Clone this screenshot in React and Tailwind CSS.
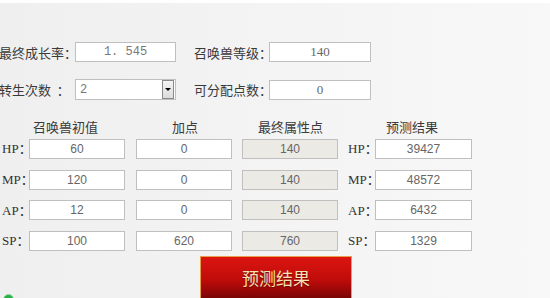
const cjk = "font-['Noto_Sans_CJK_SC',sans-serif]";
const box = 'h-[20px] border border-[#bfbfbf] flex items-center justify-center text-[#666]';

const rows = [
  { k: 'HP', base: '60', add: '0', fin: '140', res: '39427' },
  { k: 'MP', base: '120', add: '0', fin: '140', res: '48572' },
  { k: 'AP', base: '12', add: '0', fin: '140', res: '6432' },
  { k: 'SP', base: '100', add: '620', fin: '760', res: '1329' },
];

function Label({ children, className = '' }) {
  return (
    <div className={`text-[13px] text-[#3a3a3a] leading-none whitespace-nowrap ${cjk} ${className}`}>
      {children}
    </div>
  );
}

function StatLabel({ name, className = '' }) {
  return (
    <div className={`text-[13px] text-[#333] whitespace-nowrap font-['Liberation_Serif','Noto_Sans_CJK_SC',serif] ${className}`}>
      {name}：
    </div>
  );
}

function Val({ children, grey = false, className = '' }) {
  return (
    <div
      className={`${box} ${grey ? 'bg-[#ebeae4]' : 'bg-white'} text-[12px] font-['Liberation_Sans',sans-serif] ${className}`}
    >
      {children}
    </div>
  );
}

export default function App() {
  return (
    <div className="relative w-[550px] h-[298px] overflow-hidden bg-gradient-to-r from-[#efefef] to-[#f8f8f8] border-t-[3px] border-white">
      {/* top settings */}
      <div className="flex items-center h-[20px] mt-[39px]">
        <Label className="w-[76px] -ml-[1px]">最终成长率：</Label>
        <div className={`${box} w-[101px] bg-white text-[12px] text-[#777] font-['Liberation_Mono',monospace]`}>1. 545</div>
        <Label className="ml-[18px] w-[75px]">召唤兽等级：</Label>
        <div className={`${box} w-[102px] bg-white text-[13px] font-['Liberation_Serif',serif]`}>140</div>
      </div>

      <div className="flex items-center h-[21px] mt-[17px]">
        <Label className="w-[76px] -ml-[1px]">转生次数&nbsp;&nbsp;：</Label>
        <div className="w-[101px] h-[21px] border border-[#bfbfbf] bg-white flex items-center justify-between pl-[4px] pr-[1px]">
          <span className="text-[12px] text-[#777] font-['Liberation_Mono',monospace]">2</span>
          <div className="w-[12px] h-[19px] border border-[#8a8a8a] bg-gradient-to-b from-[#f4f4f4] to-[#dcdcdc] flex items-center justify-center">
            <div className="w-0 h-0 border-l-[3px] border-r-[3px] border-t-[3px] border-l-transparent border-r-transparent border-t-black" />
          </div>
        </div>
        <Label className="ml-[18px] w-[75px]">可分配点数：</Label>
        <div className={`${box} w-[102px] bg-white text-[13px] font-['Liberation_Serif',serif]`}>0</div>
      </div>

      {/* column headers */}
      <div className={`flex items-center h-[16px] mt-[19px] text-[13px] text-[#3a3a3a] ${cjk}`}>
        <span className="ml-[33px] w-[139px]">召唤兽初值</span>
        <span className="w-[86px]">加点</span>
        <span className="w-[128px]">最终属性点</span>
        <span>预测结果</span>
      </div>

      {/* stat rows */}
      <div className="flex flex-col gap-[10.7px] mt-[4px]">
        {rows.map((r) => (
          <div key={r.k} className="flex items-center h-[20px]">
            <StatLabel name={r.k} className="w-[29px] pl-[2px]" />
            <Val className="w-[96px]">{r.base}</Val>
            <Val className="w-[96px] ml-[11px]">{r.add}</Val>
            <Val grey className="w-[96px] ml-[10px]">{r.fin}</Val>
            <StatLabel name={r.k} className="w-[27px] ml-[10px]" />
            <Val className="w-[97px]">{r.res}</Val>
          </div>
        ))}
      </div>

      {/* predict button */}
      <button className="ml-[200px] mt-[5px] w-[152px] h-[48px] border border-[#e7a04a] bg-gradient-to-b from-[#dc1510] via-[#bf0c0a] to-[#6a0404] flex items-start justify-center pt-[12px]">
        <span className={`text-[17px] leading-none text-[#f6e2b2] [text-shadow:0_1px_1px_rgba(60,0,0,0.6)] ${cjk}`}>预测结果</span>
      </button>

      <div className="absolute left-[3px] top-[291px] w-[11px] h-[11px] rounded-full bg-[#27b04a] border border-[#8fd9a0]" />
      <div className="absolute left-[23px] top-[295px] w-[4px] h-[4px] rounded-full bg-[#8c8c8c]" />
    </div>
  );
}
